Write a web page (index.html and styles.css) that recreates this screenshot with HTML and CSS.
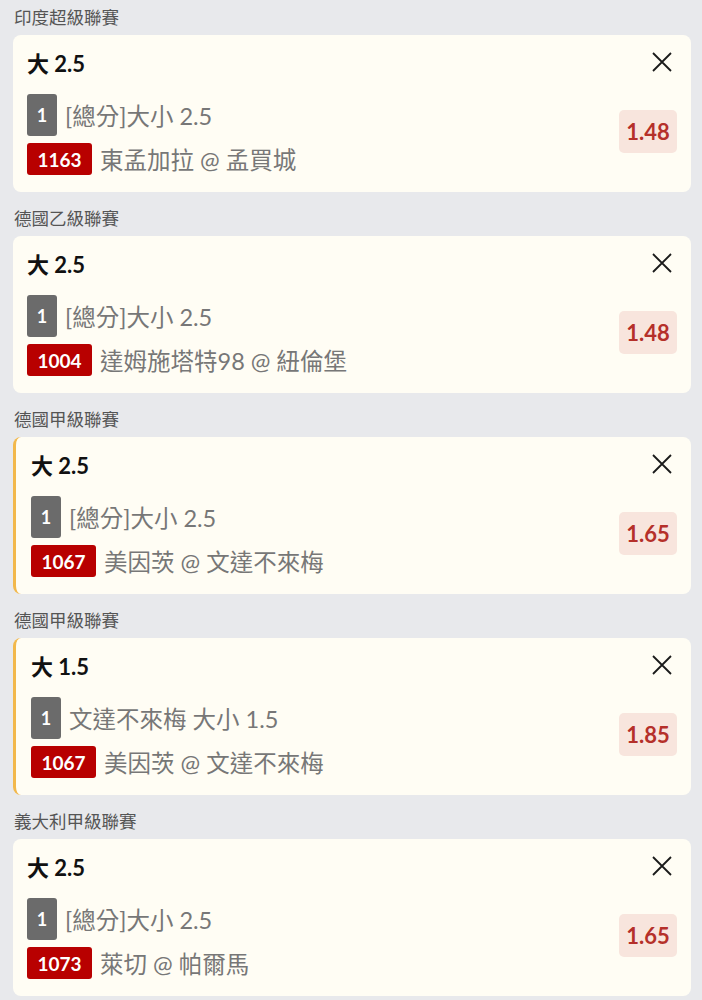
FILE: index.html
```html
<!DOCTYPE html>
<html lang="zh-Hant">
<head>
<meta charset="utf-8">
<link rel="stylesheet" href="styles.css">
</head>
<body>
<div class="list">
  <section class="group">
    <div class="league">印度超級聯賽</div>
    <div class="card">
      <div class="head"><div class="title">大 2.5</div><svg class="close" viewBox="0 0 20 20"><path d="M1 1L19 19M19 1L1 19"/></svg></div>
      <div class="body">
        <div class="lines">
          <div class="row"><span class="num">1</span><span class="txt">[總分]大小 2.5</span></div>
          <div class="row"><span class="code">1163</span><span class="txt">東孟加拉 @ 孟買城</span></div>
        </div>
        <div class="odds">1.48</div>
      </div>
    </div>
  </section>
  <section class="group">
    <div class="league">德國乙級聯賽</div>
    <div class="card">
      <div class="head"><div class="title">大 2.5</div><svg class="close" viewBox="0 0 20 20"><path d="M1 1L19 19M19 1L1 19"/></svg></div>
      <div class="body">
        <div class="lines">
          <div class="row"><span class="num">1</span><span class="txt">[總分]大小 2.5</span></div>
          <div class="row"><span class="code">1004</span><span class="txt">達姆施塔特98 @ 紐倫堡</span></div>
        </div>
        <div class="odds">1.48</div>
      </div>
    </div>
  </section>
  <section class="group">
    <div class="league">德國甲級聯賽</div>
    <div class="card marked">
      <div class="head"><div class="title">大 2.5</div><svg class="close" viewBox="0 0 20 20"><path d="M1 1L19 19M19 1L1 19"/></svg></div>
      <div class="body">
        <div class="lines">
          <div class="row"><span class="num">1</span><span class="txt">[總分]大小 2.5</span></div>
          <div class="row"><span class="code">1067</span><span class="txt">美因茨 @ 文達不來梅</span></div>
        </div>
        <div class="odds">1.65</div>
      </div>
    </div>
  </section>
  <section class="group">
    <div class="league">德國甲級聯賽</div>
    <div class="card marked">
      <div class="head"><div class="title">大 1.5</div><svg class="close" viewBox="0 0 20 20"><path d="M1 1L19 19M19 1L1 19"/></svg></div>
      <div class="body">
        <div class="lines">
          <div class="row"><span class="num">1</span><span class="txt">文達不來梅 大小 1.5</span></div>
          <div class="row"><span class="code">1067</span><span class="txt">美因茨 @ 文達不來梅</span></div>
        </div>
        <div class="odds">1.85</div>
      </div>
    </div>
  </section>
  <section class="group">
    <div class="league">義大利甲級聯賽</div>
    <div class="card">
      <div class="head"><div class="title">大 2.5</div><svg class="close" viewBox="0 0 20 20"><path d="M1 1L19 19M19 1L1 19"/></svg></div>
      <div class="body">
        <div class="lines">
          <div class="row"><span class="num">1</span><span class="txt">[總分]大小 2.5</span></div>
          <div class="row"><span class="code">1073</span><span class="txt">萊切 @ 帕爾馬</span></div>
        </div>
        <div class="odds">1.65</div>
      </div>
    </div>
  </section>
</div>
</body>
</html>
```
FILE: styles.css
```css
html, body {
  margin: 0;
  padding: 0;
  background: #e8e9ec;
  font-family: Lato, "Noto Sans CJK TC", sans-serif;
}
.list {
  display: flex;
  flex-direction: column;
  gap: 9px;
  padding: 0 11px 0 13px;
}
.group {
  display: flex;
  flex-direction: column;
}
.league {
  height: 35px;
  line-height: 35px;
  padding-left: 1px;
  font-size: 17.5px;
  color: #555;
}
.card {
  box-sizing: border-box;
  height: 157px;
  background: #fffdf4;
  border-radius: 8px;
  padding: 14px 14px 18px 14px;
  display: flex;
  flex-direction: column;
}
.card.marked {
  border-left: 3px solid #f2b84b;
  padding-left: 15px;
}
.head {
  display: flex;
  justify-content: space-between;
  align-items: flex-start;
  height: 30px;
}
.title {
  font-size: 22px;
  font-weight: 700;
  line-height: 30px;
  color: #111;
}
.close {
  width: 20px;
  height: 20px;
  margin-top: 3px;
  margin-right: 5px;
  fill: none;
  stroke: #1a1a1a;
  stroke-width: 1.8;
}
.body {
  margin-top: 15px;
  display: flex;
  align-items: center;
  justify-content: space-between;
}
.lines {
  display: flex;
  flex-direction: column;
  gap: 6px;
}
.row {
  display: flex;
  align-items: center;
  gap: 8px;
}
.num {
  width: 30px;
  height: 42px;
  border-radius: 3px;
  background: #6b6b6b;
  color: #fff;
  font-weight: 700;
  font-size: 18px;
  display: flex;
  align-items: center;
  justify-content: center;
}
.code {
  width: 65px;
  height: 32px;
  border-radius: 3px;
  background: #b80000;
  color: #fff;
  font-weight: 700;
  font-size: 19px;
  display: flex;
  align-items: center;
  justify-content: center;
}
.txt {
  font-size: 23.5px;
  color: #777;
}
.odds {
  width: 58px;
  height: 43px;
  margin-bottom: 8px;
  border-radius: 5px;
  background: #f8e5dd;
  color: #b5302a;
  font-weight: 700;
  font-size: 22px;
  display: flex;
  align-items: center;
  justify-content: center;
}
```
